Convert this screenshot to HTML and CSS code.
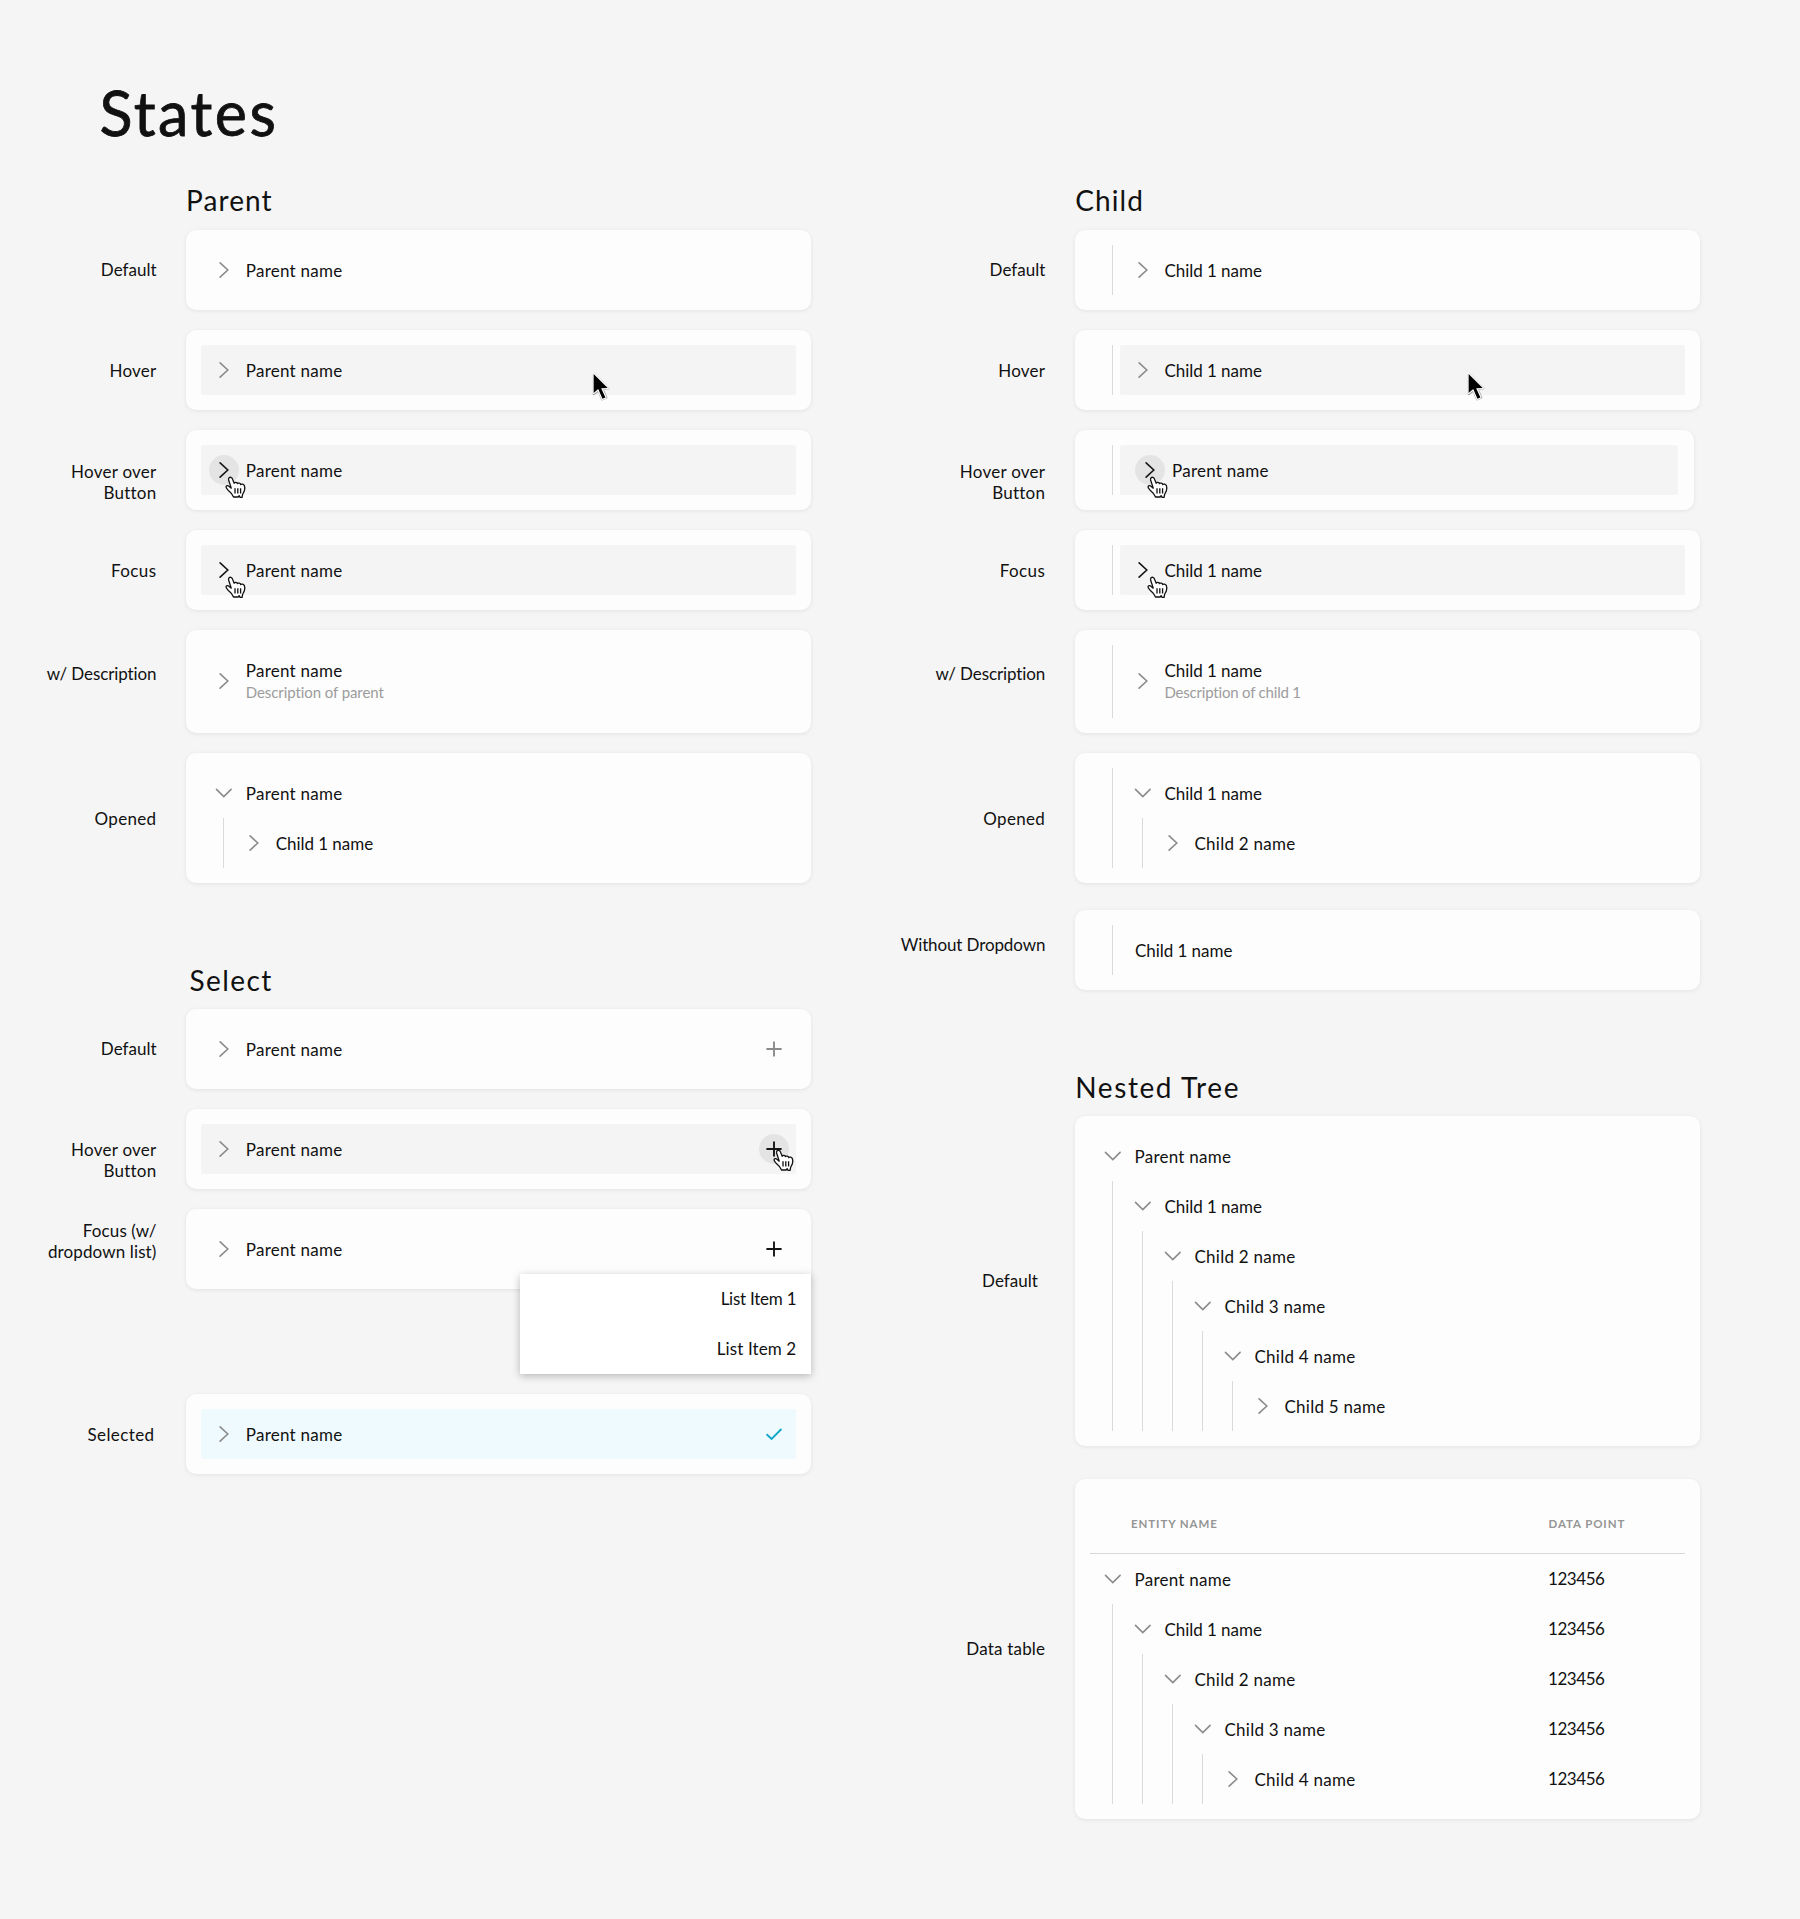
FILE: index.html
```html
<!DOCTYPE html>
<html lang="en">
<head>
<meta charset="utf-8">
<title>Tree states</title>
<link rel="stylesheet" href="styles.css">
</head>
<body>
<svg class="sprite" aria-hidden="true">
  <symbol id="right" viewBox="0 0 18 18"><path d="M5.1 1.900 12.800 9l-7.700 7.100" fill="none" stroke="currentColor" stroke-width="1.6" stroke-linecap="round"/></symbol>
  <symbol id="down" viewBox="0 0 18 18"><path d="M1.500 5.400 8.800 12.600l7.300-7.200" fill="none" stroke="currentColor" stroke-width="1.6" stroke-linecap="round"/></symbol>
  <symbol id="plus" viewBox="0 0 18 18"><path d="M1.400 9h15.200M9 1.400v15.200" fill="none" stroke="currentColor" stroke-width="1.9"/></symbol>
  <symbol id="check" viewBox="0 0 18 18"><path d="M1.600 9.200 6.600 14 16.400 4" fill="none" stroke="currentColor" stroke-width="1.9"/></symbol>
  <symbol id="hand" viewBox="-1 -1 64 68"><path d="M10 10C9 4 13 1 17 2c4 1 5 4 6 8l4 10c2-4 9-3 10 1 3-3 9-1 10 3 3-3 9-1 11 3 2 5 2 9 0 16-2 6-6 9-6 15l-1 5h-6l-3-5-3 4H25c-3-8-9-14-14-18C7 39 2 35 2 31c1-4 6-5 9-2l7 6z" fill="#fff" stroke="#111" stroke-width="4" stroke-linejoin="round"/><path d="M29.500 35v16M38 35v16M46.500 35v16" stroke="#111" stroke-width="4"/></symbol>
  <symbol id="arrow" viewBox="0 0 58 96"><path d="M6 9v60l14-12 11 28 12-5-12-26 18-2z" fill="#fff" stroke="#888" stroke-width="8" stroke-linejoin="round" opacity=".75"/><path d="M5 8v58l14-12 13 30 9-4-13-28 20-1z" fill="#000" stroke="#fff" stroke-width="7" stroke-linejoin="round" paint-order="stroke"/></symbol>
</svg>
<main class="page">
  <h1 class="page-title">States</h1>
  <div class="columns">
    <div class="column">
      <section class="group">
        <h2 class="group-title">Parent</h2>
        <div class="state"><div class="label">Default</div>
          <div class="card"><div class="row"><span class="btn"><svg><use href="#right"/></svg></span><span class="name">Parent name</span></div></div></div>
        <div class="state"><div class="label label-hover">Hover</div>
          <div class="card"><div class="row hovered"><span class="btn"><svg><use href="#right"/></svg></span><span class="name">Parent name</span></div><svg class="arrow arrow-parent"><use href="#arrow"/></svg></div></div>
        <div class="state"><div class="label label-button">Hover over<br>Button</div>
          <div class="card"><div class="row hovered"><span class="btn active round"><svg><use href="#right"/></svg></span><span class="name">Parent name</span></div><svg class="hand hand-parent"><use href="#hand"/></svg></div></div>
        <div class="state"><div class="label label-focus">Focus</div>
          <div class="card"><div class="row hovered"><span class="btn active"><svg><use href="#right"/></svg></span><span class="name">Parent name</span></div><svg class="hand hand-parent"><use href="#hand"/></svg></div></div>
        <div class="state"><div class="label label-description">w/ Description</div>
          <div class="card"><div class="row tall"><span class="btn"><svg><use href="#right"/></svg></span><div class="names"><span class="name">Parent name</span><span class="description">Description of parent</span></div></div></div></div>
        <div class="state"><div class="label label-opened">Opened</div>
          <div class="card"><div class="row"><span class="btn"><svg><use href="#down"/></svg></span><span class="name">Parent name</span></div>
            <div class="branch"><div class="row"><span class="btn"><svg><use href="#right"/></svg></span><span class="name first">Child 1 name</span></div></div></div></div>
      </section>
      <section class="group group-select">
        <h2 class="group-title">Select</h2>
        <div class="state"><div class="label">Default</div>
          <div class="card"><div class="row"><span class="btn"><svg><use href="#right"/></svg></span><span class="name">Parent name</span><span class="btn end"><svg><use href="#plus"/></svg></span></div></div></div>
        <div class="state"><div class="label label-hover">Hover over<br>Button</div>
          <div class="card"><div class="row hovered"><span class="btn"><svg><use href="#right"/></svg></span><span class="name">Parent name</span><span class="btn end round active"><svg><use href="#plus"/></svg></span></div><svg class="hand hand-select"><use href="#hand"/></svg></div></div>
        <div class="state"><div class="label label-dropdown">Focus (w/<br>dropdown list)</div>
          <div class="card"><div class="row"><span class="btn"><svg><use href="#right"/></svg></span><span class="name">Parent name</span><span class="btn end active"><svg><use href="#plus"/></svg></span></div>
            <ul class="menu"><li>List Item 1</li><li>List Item 2</li></ul></div></div>
        <div class="state state-selected"><div class="label label-selected">Selected</div>
          <div class="card"><div class="row selected"><span class="btn"><svg><use href="#right"/></svg></span><span class="name">Parent name</span><span class="btn end tick"><svg><use href="#check"/></svg></span></div></div></div>
      </section>
    </div>
    <div class="column">
      <section class="group">
        <h2 class="group-title">Child</h2>
        <div class="state"><div class="label">Default</div>
          <div class="card"><div class="branch"><div class="row"><span class="btn"><svg><use href="#right"/></svg></span><span class="name first">Child 1 name</span></div></div></div></div>
        <div class="state"><div class="label label-hover">Hover</div>
          <div class="card"><div class="branch"><div class="row hovered"><span class="btn"><svg><use href="#right"/></svg></span><span class="name first">Child 1 name</span></div></div><svg class="arrow arrow-child"><use href="#arrow"/></svg></div></div>
        <div class="state"><div class="label label-button">Hover over<br>Button</div>
          <div class="card card-narrow"><div class="branch"><div class="row hovered inset"><span class="btn active round"><svg><use href="#right"/></svg></span><span class="name">Parent name</span></div></div><svg class="hand hand-child"><use href="#hand"/></svg></div></div>
        <div class="state"><div class="label label-focus">Focus</div>
          <div class="card"><div class="branch"><div class="row hovered"><span class="btn active"><svg><use href="#right"/></svg></span><span class="name first">Child 1 name</span></div></div><svg class="hand hand-child"><use href="#hand"/></svg></div></div>
        <div class="state"><div class="label label-description">w/ Description</div>
          <div class="card"><div class="branch"><div class="row tall"><span class="btn"><svg><use href="#right"/></svg></span><div class="names"><span class="name first">Child 1 name</span><span class="description tight">Description of child 1</span></div></div></div></div></div>
        <div class="state"><div class="label label-opened">Opened</div>
          <div class="card"><div class="branch"><div class="row"><span class="btn"><svg><use href="#down"/></svg></span><span class="name first">Child 1 name</span></div>
            <div class="branch"><div class="row"><span class="btn"><svg><use href="#right"/></svg></span><span class="name">Child 2 name</span></div></div></div></div></div>
        <div class="state state-plain"><div class="label label-plain">Without Dropdown</div>
          <div class="card"><div class="branch"><div class="row inset"><span class="name first">Child 1 name</span></div></div></div></div>
      </section>
      <section class="group group-tree">
        <h2 class="group-title">Nested Tree</h2>
        <div class="state"><div class="label label-tree">Default</div>
          <div class="card"><div class="row"><span class="btn"><svg><use href="#down"/></svg></span><span class="name">Parent name</span></div>
            <div class="branch"><div class="row"><span class="btn"><svg><use href="#down"/></svg></span><span class="name first">Child 1 name</span></div>
              <div class="branch"><div class="row"><span class="btn"><svg><use href="#down"/></svg></span><span class="name">Child 2 name</span></div>
                <div class="branch"><div class="row"><span class="btn"><svg><use href="#down"/></svg></span><span class="name">Child 3 name</span></div>
                  <div class="branch"><div class="row"><span class="btn"><svg><use href="#down"/></svg></span><span class="name">Child 4 name</span></div>
                    <div class="branch"><div class="row"><span class="btn"><svg><use href="#right"/></svg></span><span class="name">Child 5 name</span></div></div></div></div></div></div></div></div>
        <div class="state state-table"><div class="label label-table">Data table</div>
          <div class="card">
            <div class="table-head"><span>Entity name</span><span class="point-head">Data point</span></div>
            <div class="row"><span class="btn"><svg><use href="#down"/></svg></span><span class="name">Parent name</span><span class="point">123456</span></div>
            <div class="branch"><div class="row"><span class="btn"><svg><use href="#down"/></svg></span><span class="name first">Child 1 name</span><span class="point">123456</span></div>
              <div class="branch"><div class="row"><span class="btn"><svg><use href="#down"/></svg></span><span class="name">Child 2 name</span><span class="point">123456</span></div>
                <div class="branch"><div class="row"><span class="btn"><svg><use href="#down"/></svg></span><span class="name">Child 3 name</span><span class="point">123456</span></div>
                  <div class="branch"><div class="row"><span class="btn"><svg><use href="#right"/></svg></span><span class="name">Child 4 name</span><span class="point">123456</span></div></div></div></div></div></div></div>
      </section>
    </div>
  </div>
</main>
</body>
</html>
```
FILE: styles.css
```css
* { box-sizing: border-box; }
body {
  margin: 0;
  background: #f5f5f5;
  color: #111;
  font-family: Lato, "Open Sans", sans-serif;
  font-size: 17px;
  line-height: 21.25px;
  font-variant-ligatures: none;
}
.sprite { display: none; }
.page { height: 1919px; padding-top: 73px; overflow: hidden; }
.page-title {
  margin: 0 0 0 99.500px;
  height: 105px;
  font-size: 61px;
  font-weight: 400;
  line-height: 80px;
  letter-spacing: 2.500px;
  -webkit-text-stroke: 0.8px #111;
}
.columns { display: grid; grid-template-columns: 811.25px 888.75px; }
.group-title {
  margin: 0 0 0 186px;
  height: 52px;
  font-size: 28px;
  font-weight: 400;
  line-height: 45px;
  letter-spacing: 1.100px;
}
.column + .column .group-title { margin-left: 264px; }
.group-select { margin-top: 74.500px; }
.group-select .group-title { margin-left: 189.500px; line-height: 46px; letter-spacing: 1.400px; }
.group-tree { margin-top: 74.500px; }
.group-tree .group-title { height: 51.700px; letter-spacing: 1.600px; }

.state {
  display: grid;
  grid-template-columns: minmax(0, 1fr) 625px;
  column-gap: 29.750px;
  align-items: start;
  margin-bottom: 20px;
}
.state:last-child { margin-bottom: 0; }
.state-plain { margin-top: 27.500px; }
.state-selected { margin-top: 105px; }
.state-table { margin-top: 32.500px; }

.label { padding-top: 28.600px; text-align: right; white-space: nowrap; }
.label-hover { padding-top: 29.600px; letter-spacing: 0.25px; }
.label-button { padding-top: 31.200px; letter-spacing: 0.25px; }
.label-focus { padding-top: 29.900px; letter-spacing: 0.4px; }
.label-description { padding-top: 32.900px; letter-spacing: -0.1px; }
.label-opened { padding-top: 55.200px; letter-spacing: 0.35px; }
.label-plain { padding-top: 23.900px; letter-spacing: -0.12px; }
.label-dropdown { padding-top: 10.900px; letter-spacing: 0.12px; }
.label-selected { padding: 29.900px 2px 0 0; letter-spacing: 0.4px; }
.label-tree { padding: 154.200px 7.500px 0 0; }
.label-table { padding-top: 159.400px; letter-spacing: 0.2px; }

.card {
  position: relative;
  padding: 15px;
  border-radius: 10px;
  background: #fdfdfd;
  box-shadow: 0 1px 4px rgba(0, 0, 0, 0.08);
}
.card-narrow { width: 619px; padding-right: 16.500px; }
.row {
  display: flex;
  align-items: center;
  gap: 7px;
  height: 50px;
  padding: 0 7.500px;
  border-radius: 2.500px;
}
.row.tall { height: 72.500px; }
.row.inset { padding-left: 15px; }
.hovered { background: #f4f4f4; }
.selected { background: #eefafd; }
.branch { margin-left: 22px; padding-left: 7px; border-left: 1px solid #dadada; }
.name { padding-top: 1.500px; letter-spacing: 0.26px; }
.name.first { letter-spacing: -0.05px; }
.names { display: flex; flex-direction: column; }
.description { color: #9c9c9c; font-size: 15px; line-height: 22.500px; letter-spacing: -0.08px; }
.description.tight { letter-spacing: -0.2px; }

.btn {
  display: flex;
  align-items: center;
  justify-content: center;
  flex: none;
  width: 30px;
  height: 30px;
  border-radius: 50%;
  color: #8b8b8b;
}
.btn svg { width: 18px; height: 18px; }
.btn.active { color: #161616; }
.btn.round { background: #e4e4e4; }
.btn.end { margin-left: auto; }
.btn.tick { color: #12a6c9; }

.hand { position: absolute; width: 21px; height: 23px; }
.hand-parent { left: 38.500px; top: 45.500px; }
.hand-child { left: 72px; top: 46px; }
.hand-select { left: 587px; top: 39.500px; }
.arrow { position: absolute; width: 19px; height: 32px; }
.arrow-parent { left: 405.700px; top: 41px; }
.arrow-child { left: 391.500px; top: 41px; }

.menu {
  position: absolute;
  top: 65px;
  right: 0;
  width: 291px;
  margin: 0;
  padding: 0;
  list-style: none;
  background: #fff;
  box-shadow: 0 2px 8px rgba(0, 0, 0, 0.26);
}
.menu li { height: 50px; padding-right: 15px; line-height: 49.500px; text-align: right; }
.menu li:first-child { letter-spacing: -0.25px; }
.menu li:last-child { letter-spacing: 0.1px; }

.table-head {
  display: flex;
  justify-content: space-between;
  height: 60px;
  padding-left: 41px;
  border-bottom: 1px solid #d8d8d8;
  color: #959595;
  font-size: 11.500px;
  font-weight: 700;
  line-height: 60px;
  letter-spacing: 0.9px;
  text-transform: uppercase;
}
.point-head { width: 136.500px; }
.point { width: 129.500px; margin-left: auto; padding-bottom: 1px; letter-spacing: -0.45px; }
```
